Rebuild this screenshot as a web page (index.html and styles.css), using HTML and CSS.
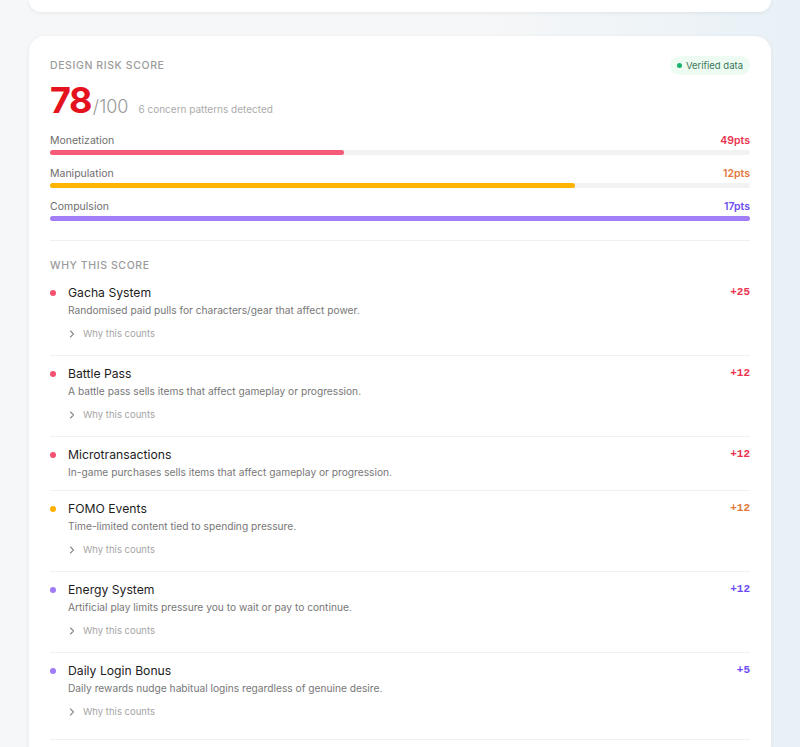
FILE: index.html
```html
<!DOCTYPE html>
<html lang="en">
<head>
    <meta charset="UTF-8">
    <meta name="viewport" content="width=device-width, initial-scale=1.0">
    <title>Design Risk Score</title>
    <link rel="stylesheet" href="styles.css">
</head>
<body>
    <div class="page">
        <div class="card card-prev"></div>

        <div class="card">
            <div class="card-head">
                <span class="eyebrow">Design Risk Score</span>
                <span class="badge"><span class="badge-dot"></span>Verified data</span>
            </div>

            <div class="score-row">
                <span class="score-num">78</span>
                <span class="score-max">/100</span>
                <span class="score-note">6 concern patterns detected</span>
            </div>

            <div class="bars">
                <div class="bar-item">
                    <div class="bar-top">
                        <span>Monetization</span>
                        <span class="pts red">49pts</span>
                    </div>
                    <div class="track"><div class="fill fill-red" style="width: 42%;"></div></div>
                </div>
                <div class="bar-item">
                    <div class="bar-top">
                        <span>Manipulation</span>
                        <span class="pts orange">12pts</span>
                    </div>
                    <div class="track"><div class="fill fill-yellow" style="width: 75%;"></div></div>
                </div>
                <div class="bar-item">
                    <div class="bar-top">
                        <span>Compulsion</span>
                        <span class="pts purple">17pts</span>
                    </div>
                    <div class="track"><div class="fill fill-purple" style="width: 100%;"></div></div>
                </div>
            </div>

            <div class="why">
                <div class="eyebrow">Why this score</div>

                <div class="reason">
                    <span class="dot dot-red"></span>
                    <div class="reason-body">
                        <div class="reason-title">Gacha System</div>
                        <div class="reason-desc">Randomised paid pulls for characters/gear that affect power.</div>
                        <div class="why-link"><svg class="chev" width="6" height="8" viewBox="0 0 6 8"><path d="M1.5 1 L4.5 4 L1.5 7" fill="none" stroke="#8a8a8a" stroke-width="1.1" stroke-linecap="round" stroke-linejoin="round"/></svg>Why this counts</div>
                    </div>
                    <span class="delta red">+25</span>
                </div>

                <div class="reason">
                    <span class="dot dot-red"></span>
                    <div class="reason-body">
                        <div class="reason-title">Battle Pass</div>
                        <div class="reason-desc">A battle pass sells items that affect gameplay or progression.</div>
                        <div class="why-link"><svg class="chev" width="6" height="8" viewBox="0 0 6 8"><path d="M1.5 1 L4.5 4 L1.5 7" fill="none" stroke="#8a8a8a" stroke-width="1.1" stroke-linecap="round" stroke-linejoin="round"/></svg>Why this counts</div>
                    </div>
                    <span class="delta red">+12</span>
                </div>

                <div class="reason">
                    <span class="dot dot-red"></span>
                    <div class="reason-body">
                        <div class="reason-title">Microtransactions</div>
                        <div class="reason-desc">In-game purchases sells items that affect gameplay or progression.</div>
                    </div>
                    <span class="delta red">+12</span>
                </div>

                <div class="reason">
                    <span class="dot dot-yellow"></span>
                    <div class="reason-body">
                        <div class="reason-title">FOMO Events</div>
                        <div class="reason-desc">Time-limited content tied to spending pressure.</div>
                        <div class="why-link"><svg class="chev" width="6" height="8" viewBox="0 0 6 8"><path d="M1.5 1 L4.5 4 L1.5 7" fill="none" stroke="#8a8a8a" stroke-width="1.1" stroke-linecap="round" stroke-linejoin="round"/></svg>Why this counts</div>
                    </div>
                    <span class="delta orange">+12</span>
                </div>

                <div class="reason">
                    <span class="dot dot-purple"></span>
                    <div class="reason-body">
                        <div class="reason-title">Energy System</div>
                        <div class="reason-desc">Artificial play limits pressure you to wait or pay to continue.</div>
                        <div class="why-link"><svg class="chev" width="6" height="8" viewBox="0 0 6 8"><path d="M1.5 1 L4.5 4 L1.5 7" fill="none" stroke="#8a8a8a" stroke-width="1.1" stroke-linecap="round" stroke-linejoin="round"/></svg>Why this counts</div>
                    </div>
                    <span class="delta purple">+12</span>
                </div>

                <div class="reason reason-last">
                    <span class="dot dot-purple"></span>
                    <div class="reason-body">
                        <div class="reason-title">Daily Login Bonus</div>
                        <div class="reason-desc">Daily rewards nudge habitual logins regardless of genuine desire.</div>
                        <div class="why-link"><svg class="chev" width="6" height="8" viewBox="0 0 6 8"><path d="M1.5 1 L4.5 4 L1.5 7" fill="none" stroke="#8a8a8a" stroke-width="1.1" stroke-linecap="round" stroke-linejoin="round"/></svg>Why this counts</div>
                    </div>
                    <span class="delta purple">+5</span>
                </div>
            </div>
        </div>
    </div>
</body>
</html>
```

FILE: styles.css
```css
body {
    font-family: Inter, 'Noto Sans', sans-serif;
    margin: 0;
    padding: 0;
    color: #222;
    background-color: #f6f7f8;
    background-image: linear-gradient(90deg, rgba(230, 240, 247, 0) 60%, #e8f1f7 100%);
    min-height: 747px;
}
.page {
    width: 742px;
    margin: 0 auto;
    padding-bottom: 40px;
}
.card {
    background-color: white;
    border-radius: 16px;
    box-shadow: 0 1px 4px rgba(0, 0, 0, 0.07);
    padding: 20px 21px 30px;
}
.card-prev {
    height: 12px;
    padding: 0;
    border-radius: 0 0 16px 16px;
    margin-bottom: 24px;
}
.card-head {
    display: flex;
    justify-content: space-between;
    align-items: center;
    height: 19px;
}
.eyebrow {
    font-size: 10.5px;
    font-weight: 500;
    letter-spacing: 0.6px;
    text-transform: uppercase;
    color: #9b9b9b;
    line-height: 14px;
}
.badge {
    display: flex;
    align-items: center;
    gap: 4px;
    height: 19px;
    padding: 0 7px 0 7px;
    border-radius: 10px;
    background-color: #edfbf2;
    color: #3b7658;
    font-size: 9.5px;
}
.badge-dot {
    width: 5px;
    height: 5px;
    border-radius: 50%;
    background-color: #17b26a;
}
.score-row {
    display: flex;
    align-items: baseline;
    margin-top: 7px;
    height: 36px;
}
.score-num {
    font-size: 36px;
    line-height: 36px;
    font-weight: 700;
    letter-spacing: -1.5px;
    color: #e3121c;
}
.score-max {
    font-size: 18px;
    font-weight: 300;
    color: #9a9a9a;
    margin-left: 2px;
}
.score-note {
    font-size: 10px;
    color: #ababab;
    margin-left: 10px;
}
.bars {
    margin-top: 16px;
    padding-bottom: 19px;
    border-bottom: 1px solid #f0f0f0;
}
.bar-item + .bar-item {
    margin-top: 12px;
}
.bar-top {
    display: flex;
    justify-content: space-between;
    font-size: 10.5px;
    line-height: 14px;
    color: #6e6e6e;
}
.pts {
    font-weight: 600;
}
.track {
    margin-top: 2px;
    height: 5px;
    border-radius: 3px;
    background-color: #f2f2f2;
}
.fill {
    height: 5px;
    border-radius: 3px;
}
.fill-red { background-color: #f55a79; }
.fill-yellow { background-color: #ffb400; }
.fill-purple { background-color: #a27ef8; }
.red { color: #e8344e; }
.orange { color: #e2783a; }
.purple { color: #6c4cf1; }
.why {
    padding-top: 18px;
}
.why > .eyebrow {
    margin-bottom: 11px;
}
.reason {
    display: flex;
    align-items: flex-start;
    padding: 9px 0 9px;
    border-bottom: 1px solid #f1f1f1;
}
.why > .eyebrow + .reason {
    padding-top: 0;
}
.reason-last {
    padding-bottom: 15px;
}
.dot {
    width: 6px;
    height: 6px;
    border-radius: 50%;
    margin: 6px 12px 0 0;
    flex-shrink: 0;
}
.dot-red { background-color: #f4506f; }
.dot-yellow { background-color: #ffb000; }
.dot-purple { background-color: #a17cf8; }
.reason-body {
    flex: 1;
}
.reason-title {
    font-size: 12.2px;
    line-height: 17px;
    color: #1d1d1d;
}
.reason-desc {
    font-size: 10.2px;
    line-height: 18px;
    color: #777;
}
.why-link {
    display: flex;
    align-items: center;
    margin: 6px 0 3px;
    font-size: 9.5px;
    line-height: 18px;
    color: #a5a5a5;
}
.chev {
    margin: 0 8px 0 1px;
}
.delta {
    font-family: 'Liberation Mono', monospace;
    font-size: 11px;
    font-weight: 700;
    line-height: 17px;
}
```
